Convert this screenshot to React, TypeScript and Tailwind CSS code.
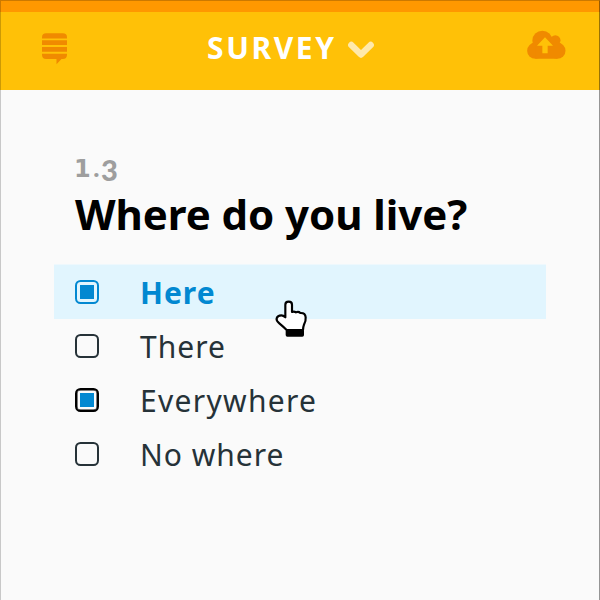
import React from 'react';

type Option = { label: string; checked?: boolean; active?: boolean; dark?: boolean };

const options: Option[] = [
  { label: 'Here', checked: true, active: true },
  { label: 'There' },
  { label: 'Everywhere', checked: true, dark: true },
  { label: 'No where' },
];

function MessageIcon() {
  return (
    <svg className="h-[32px] w-[26px]" viewBox="0 0 26 32" fill="#f08a00">
      <path d="M0 5.5V4.5Q0 0.3 4.2 0.3H20.8Q25 0.3 25 4.5V5.5Z" />
      <path d="M0 7.3H25V12H0ZM0 14H25V18.8H0Z" />
      <path d="M0 20.7H25V21.8Q25 26 20.8 26H19.5L14.5 31.3V26H4.2Q0 26 0 21.8Z" />
    </svg>
  );
}

function CloudIcon() {
  return (
    <svg className="h-[30px] w-[39px]" viewBox="0 0 117 90">
      <g fill="#f08a00">
        <circle cx="25" cy="62" r="24.5" />
        <circle cx="46" cy="32" r="30" />
        <circle cx="85" cy="31" r="15.5" />
        <circle cx="91" cy="62" r="24.5" />
        <path d="M25 40H70V22L85 30V40H91V86.5H25Z" />
      </g>
      <path d="M54 22L78 47H62V70H46V47H30Z" fill="#ffc107" />
    </svg>
  );
}

function HandPointer() {
  return (
    <svg className="absolute left-[260px] top-[290px] size-[60px]" viewBox="0 0 180 180">
      <path
        d="M80 120Q70 110 58 100Q48 92 50 85Q53 76 64 76Q70 76 76 82V44Q76 35 86 35Q96 35 96 44V66Q102 63 108 67Q116 64 121 69Q136 68 137 82Q138 94 132 104Q129 112 129 120Z"
        fill="#fff"
        stroke="#000"
        strokeWidth="6.5"
        strokeLinejoin="round"
      />
      <rect x="77" y="118" width="55" height="22" rx="5" />
    </svg>
  );
}

function Checkbox({ option }: { option: Option }) {
  const frame = option.active
    ? 'border-[#0288d1]'
    : option.dark
      ? 'border-black shadow-[inset_0_0_0_0.5px_#000]'
      : 'border-[#263238]';
  return (
    <span className={`flex size-6 items-center justify-center rounded-[5.5px] border-2 ${frame}`}>
      {option.checked && <span className="size-[14px] bg-[#0288d1]" />}
    </span>
  );
}

export default function App() {
  return (
    <div className="relative h-[600px] w-[600px] overflow-hidden bg-[#fafafa] font-['Noto_Sans',sans-serif]">
      <header className="flex h-[90px] items-start border-t-[12px] border-[#ff9800] bg-[#ffc107] pl-[42px] pr-[34px]">
        <div className="pt-[21px]"><MessageIcon /></div>
        <div className="ml-[139px] flex items-start">
          <h2 className="w-[140px] whitespace-nowrap pt-[15px] text-[30px] font-bold leading-[42px] tracking-[2.6px] text-white">SURVEY</h2>
          <svg className="mt-[29px] h-[18px] w-[28px]" viewBox="0 0 28 18" fill="none" stroke="#ffe9ab" strokeWidth="6.4" strokeLinecap="round" strokeLinejoin="round">
            <path d="M4.3 3.9L14 13.6L23.7 3.9" />
          </svg>
        </div>
        <div className="ml-auto pt-[18px]"><CloudIcon /></div>
      </header>
      <main>
        <div className="flex h-[103px] items-start pl-[74px] pt-[67px] font-bold text-[#9e9e9e]">
          <span className="w-[19px] font-['DejaVu_Sans'] text-[24px] leading-[24px]">1</span>
          <span className="-mt-px w-[8px] text-[24px] leading-[24px]">.</span>
          <span className="-mt-[2px] font-['Lato'] text-[29px] font-black leading-[29px]">3</span>
        </div>
        <h1 className="h-[72px] whitespace-nowrap pl-[75px] text-[42px] font-bold leading-[42px] tracking-[-0.06px] text-black">Where do you live?</h1>
        <ul>
          {options.map((option) => (
            <li
              key={option.label}
              className={`mx-[54px] flex h-[54px] items-center gap-[41px] pl-[21px] text-[30px] ${option.active ? 'bg-[#e1f5fe] font-bold tracking-[1px] text-[#0288d1] shadow-[0_-1px_0_#eef8fd]' : option.dark ? 'tracking-[1.3px] text-[#263238]' : 'tracking-[1px] text-[#263238]'}`}
            >
              <Checkbox option={option} />
              <span className="whitespace-nowrap">{option.label}</span>
            </li>
          ))}
        </ul>
      </main>
      <HandPointer />
      <div className="pointer-events-none absolute inset-0 border-l border-r border-t border-l-black/20 border-r-black/40 border-t-black/20" />
    </div>
  );
}
